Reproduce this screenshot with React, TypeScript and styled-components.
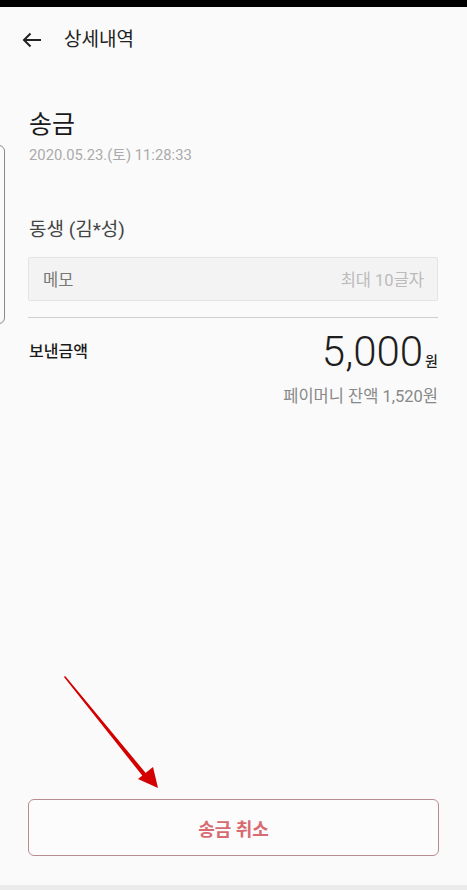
import styled, { createGlobalStyle } from "styled-components"

const GlobalStyle = createGlobalStyle`
  html, body {
    margin: 0;
    padding: 0;
    background: #fafafa;
  }
  body {
    font-family: Roboto, "Noto Sans CJK KR", sans-serif;
  }
`

const BackIcon = () => (
  <svg width="20" height="16" viewBox="0 0 20 16" fill="none">
    <path d="M19 8H2M8.5 1.5L2 8l6.5 6.5" stroke="#222" strokeWidth="2" />
  </svg>
)

const Annotation = () => (
  <ArrowLayer width="110" height="125" viewBox="0 0 110 125">
    <path d="M3 2L86 102L84 104Z" fill="#d40000" stroke="#d40000" strokeWidth="1.6" strokeLinejoin="round" />
    <path d="M76 104L91 92L96 113Z" fill="#d40000" />
  </ArrowLayer>
)

const DetailPage = () => {
  return (
    <Page>
      <GlobalStyle />
      <StatusBar />
      <Header>
        <BackIcon />
        <HeaderTitle>상세내역</HeaderTitle>
      </Header>
      <Content>
        <Kind>송금</Kind>
        <DateText>2020.05.23.(토) 11:28:33</DateText>
        <Recipient>동생 (김*성)</Recipient>
        <MemoBox>
          <MemoLabel>메모</MemoLabel>
          <MemoHint>최대 10글자</MemoHint>
        </MemoBox>
        <Divider />
        <AmountRow>
          <AmountLabel>보낸금액</AmountLabel>
          <Amount>
            5,000<Won>원</Won>
          </Amount>
        </AmountRow>
        <Balance>페이머니 잔액 1,520원</Balance>
      </Content>
      <Spacer />
      <Footer>
        <CancelButton>송금 취소</CancelButton>
      </Footer>
      <BottomStrip />
      <EdgeHandle />
      <Annotation />
    </Page>
  )
}

const Page = styled.div`
  position: relative;
  display: flex;
  flex-direction: column;
  height: 890px;
  overflow: hidden;
  background: #fafafa;
  color: #222;
`
const StatusBar = styled.div`
  height: 7px;
  background: #000;
`
const Header = styled.div`
  height: 66px;
  display: flex;
  align-items: center;
  padding-left: 22px;
  gap: 22px;
`
const HeaderTitle = styled.div`
  font-size: 19px;
  line-height: 24px;
  color: #222;
`
const Content = styled.div`
  display: flex;
  flex-direction: column;
  padding: 0 29px 0 28px;
`
const Kind = styled.div`
  margin-top: 37px;
  padding-left: 1px;
  font-size: 25px;
  line-height: 30px;
  color: #1a1a1a;
`
const DateText = styled.div`
  margin-top: 5px;
  padding-left: 1px;
  font-size: 14.8px;
  line-height: 20px;
  color: #aaa;
`
const Recipient = styled.div`
  margin-top: 52px;
  padding-left: 1px;
  font-size: 19px;
  line-height: 26px;
  color: #444;
`
const MemoBox = styled.div`
  margin-top: 14px;
  height: 44px;
  box-sizing: border-box;
  display: flex;
  align-items: center;
  justify-content: space-between;
  padding: 0 13px 0 14px;
  background: #f3f3f3;
  border: 1px solid #e4e4e4;
  border-radius: 2px;
`
const MemoLabel = styled.span`
  font-size: 16.5px;
  color: #777;
`
const MemoHint = styled.span`
  font-size: 16.5px;
  color: #bbb;
`
const Divider = styled.div`
  margin-top: 16px;
  height: 1px;
  background: #cfcfcf;
`
const AmountRow = styled.div`
  margin-top: 12px;
  display: flex;
  justify-content: space-between;
  align-items: flex-start;
`
const AmountLabel = styled.div`
  padding-top: 12px;
  padding-left: 1px;
  font-size: 16px;
  line-height: 20px;
  font-weight: 500;
  color: #1a1a1a;
`
const Amount = styled.div`
  font-size: 42px;
  line-height: 44px;
  font-weight: 300;
  color: #1e1e1e;
`
const Won = styled.span`
  margin-left: 2px;
  font-size: 14px;
  line-height: 1;
  font-weight: 500;
`
const Balance = styled.div`
  margin-top: 13px;
  align-self: flex-end;
  font-size: 16.5px;
  line-height: 20px;
  color: #888;
`
const Spacer = styled.div`
  flex: 1;
`
const Footer = styled.div`
  padding: 0 28px 29px 28px;
`
const CancelButton = styled.button`
  width: 100%;
  height: 57px;
  background: #fcfcfc;
  border: 1px solid #b88c8f;
  border-radius: 6px;
  font-family: inherit;
  font-size: 18px;
  font-weight: 700;
  color: #d86a72;
`
const BottomStrip = styled.div`
  height: 5px;
  background: #ebebeb;
`
const EdgeHandle = styled.div`
  position: absolute;
  left: -10px;
  top: 145px;
  width: 13px;
  height: 177px;
  border: 1px solid #8a8a8a;
  border-radius: 6px;
`
const ArrowLayer = styled.svg`
  position: absolute;
  left: 62px;
  top: 675px;
`

export default DetailPage
